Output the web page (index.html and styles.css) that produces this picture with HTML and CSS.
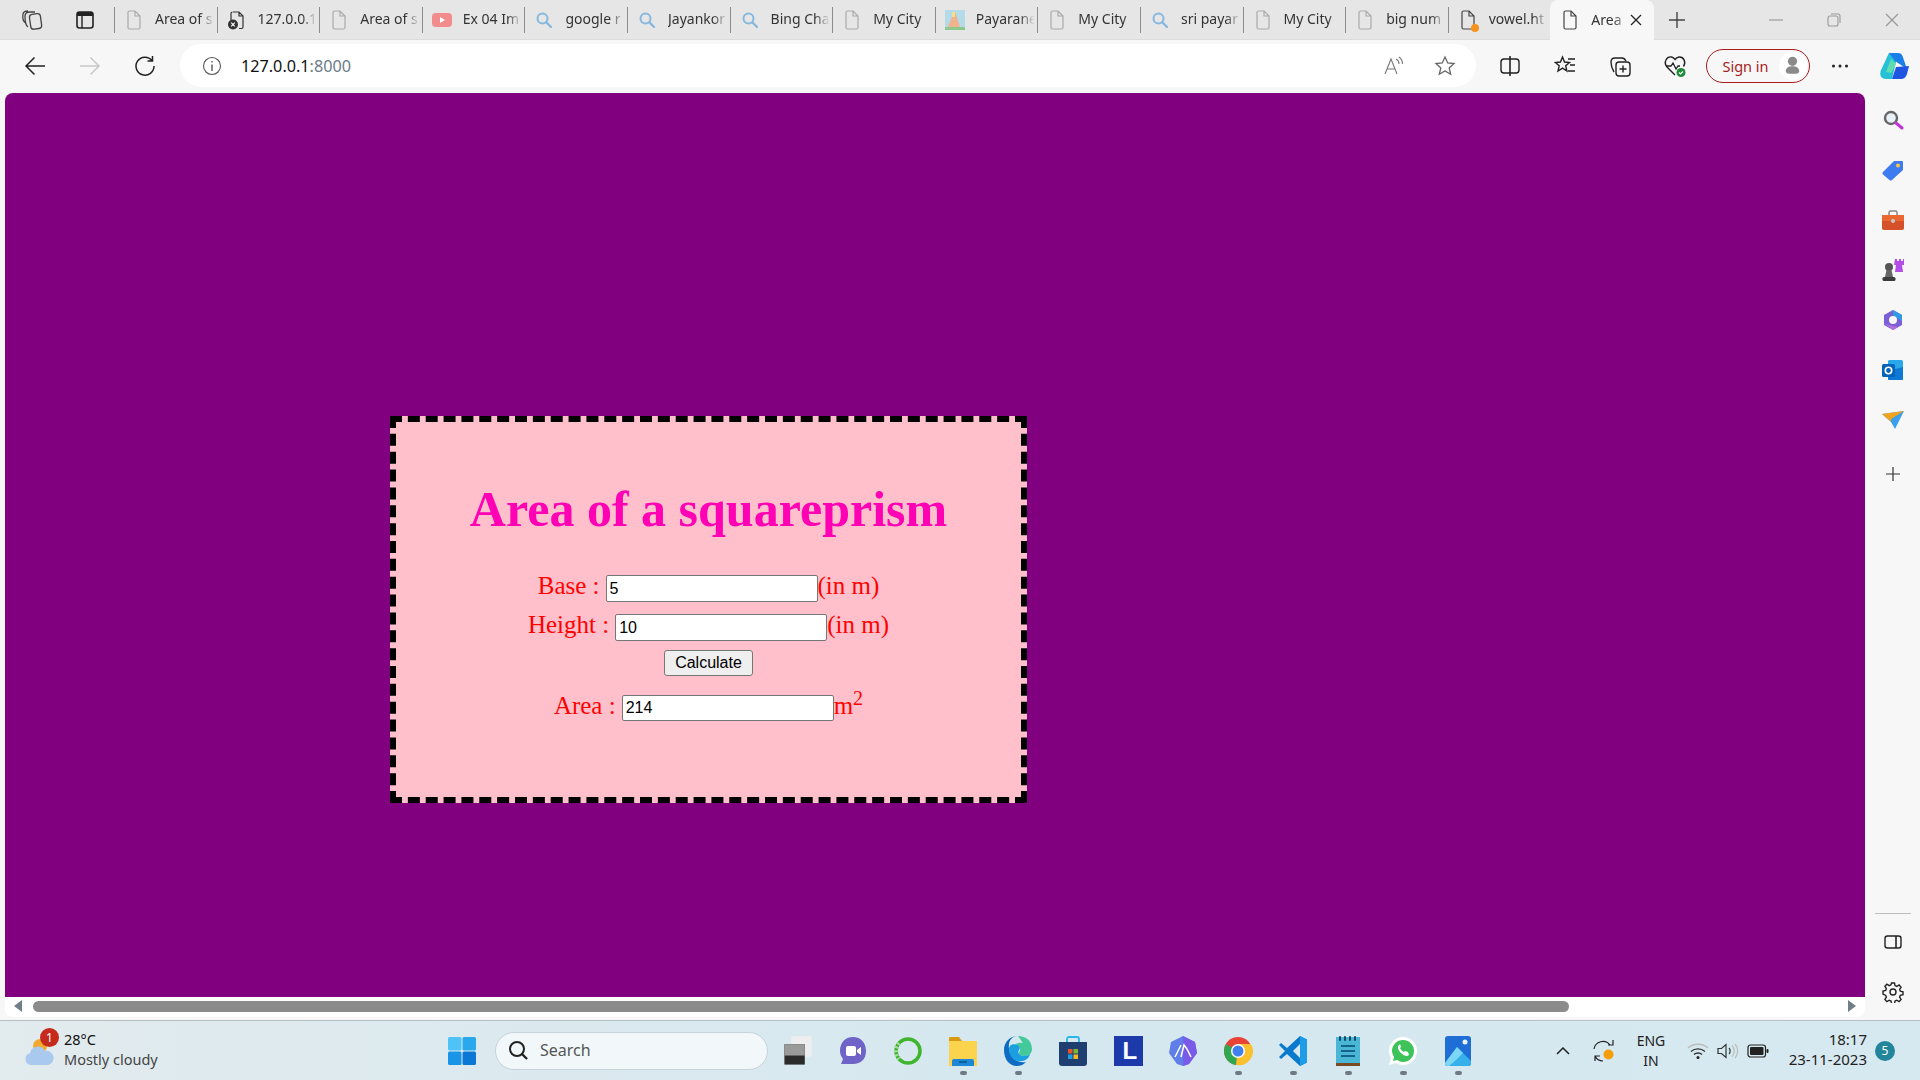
FILE: index.html
```html
<!DOCTYPE html>
<html lang="en">
<head>
    <meta charset="UTF-8">
    <meta name="viewport" content="width=device-width, initial-scale=1.0">
    <title>Area of a squareprism</title>
    <link rel="stylesheet" href="styles.css">
</head>
<body>
    <svg class="defs" width="0" height="0">
        <symbol id="doc" viewBox="0 0 20 20"><path d="M4 2.5a1.5 1.5 0 0 1 1.5-1.5H11l5 5v11.500a1.500 1.500 0 0 1-1.500 1.500h-9A1.500 1.500 0 0 1 4 17.500z M11 1v5h5" fill="none" stroke="currentColor" stroke-width="1.200"/></symbol>
        <symbol id="find" viewBox="0 0 20 20"><circle cx="8.500" cy="8.500" r="5" fill="none" stroke="#86b8de" stroke-width="2"/><path d="M12.500 12.500l4.500 4.500" stroke="#86b8de" stroke-width="2.400" stroke-linecap="round"/></symbol>
    </svg>

    <div class="tabstrip">
        <div class="strip-btn">
            <svg width="24" height="24" viewBox="0 0 24 24" fill="none" stroke="#444" stroke-width="1.300"><rect x="10" y="6" width="11" height="15" rx="3" transform="rotate(-8 15 13)"/><path d="M8 19C5 17 5 12 5 8c0-2 1-4 5-4h5M5.500 15C3 13 2.500 9 3 6c.3-2 2-3 5-3"/></svg>
        </div>
        <div class="strip-btn">
            <svg width="22" height="22" viewBox="0 0 22 22"><rect x="3" y="3" width="16" height="16" rx="2.500" fill="none" stroke="#222" stroke-width="1.600"/><path d="M3 5.500a2.500 2.500 0 0 1 2.500-2.500h11a2.500 2.500 0 0 1 2.500 2.500V7H3z" fill="#222"/><path d="M8 7v12" stroke="#222" stroke-width="1.400"/></svg>
        </div>
        <div class="tab"><svg class="tab-icon faded" width="20" height="20"><use href="#doc"/></svg><span class="tab-title">Area of s</span></div>
        <div class="tab">
            <svg class="tab-icon" width="20" height="20" viewBox="0 0 20 20"><path d="M6 2h6l4 4v11a1.500 1.500 0 0 1-1.500 1.500H12M4 10V3.500A1.500 1.500 0 0 1 5.500 2M12 2v4h4" fill="none" stroke="#333" stroke-width="1.200"/><circle cx="6" cy="14.500" r="5" fill="#333"/><path d="M4.200 12.700l3.600 3.600M7.800 12.700l-3.600 3.600" stroke="#fff" stroke-width="1.200"/></svg>
            <span class="tab-title">127.0.0.1</span>
        </div>
        <div class="tab"><svg class="tab-icon faded" width="20" height="20"><use href="#doc"/></svg><span class="tab-title">Area of s</span></div>
        <div class="tab">
            <svg class="tab-icon" width="20" height="20" viewBox="0 0 20 20"><rect y="3" width="20" height="14" rx="4" fill="#f28b8b"/><path d="M8 7l5 3-5 3z" fill="#fff"/></svg>
            <span class="tab-title">Ex 04 Im</span>
        </div>
        <div class="tab"><svg class="tab-icon" width="20" height="20"><use href="#find"/></svg><span class="tab-title">google r</span></div>
        <div class="tab"><svg class="tab-icon" width="20" height="20"><use href="#find"/></svg><span class="tab-title">Jayankor</span></div>
        <div class="tab"><svg class="tab-icon" width="20" height="20"><use href="#find"/></svg><span class="tab-title">Bing Cha</span></div>
        <div class="tab"><svg class="tab-icon faded" width="20" height="20"><use href="#doc"/></svg><span class="tab-title">My City</span></div>
        <div class="tab">
            <svg class="tab-icon" width="20" height="20" viewBox="0 0 20 20"><rect width="20" height="20" fill="#b5dbe8"/><rect y="17" width="20" height="3" fill="#8cc98c"/><path d="M3 17L8.500 3h2L15 17z" fill="#efb48e"/><path d="M7 2h3v5H7z" fill="#f3e08a"/></svg>
            <span class="tab-title">Payarane</span>
        </div>
        <div class="tab"><svg class="tab-icon faded" width="20" height="20"><use href="#doc"/></svg><span class="tab-title">My City</span></div>
        <div class="tab"><svg class="tab-icon" width="20" height="20"><use href="#find"/></svg><span class="tab-title">sri payar</span></div>
        <div class="tab"><svg class="tab-icon faded" width="20" height="20"><use href="#doc"/></svg><span class="tab-title">My City</span></div>
        <div class="tab"><svg class="tab-icon faded" width="20" height="20"><use href="#doc"/></svg><span class="tab-title">big num</span></div>
        <div class="tab">
            <span class="tab-icon unsaved"><svg width="20" height="20"><use href="#doc"/></svg><i class="orange-dot"></i></span>
            <span class="tab-title">vowel.ht</span>
        </div>
        <div class="tab tab-active">
            <svg class="tab-icon" width="20" height="20"><use href="#doc"/></svg>
            <span class="tab-title">Area</span>
            <svg class="tab-close" width="12" height="12" viewBox="0 0 12 12"><path d="M1 1l10 10M11 1L1 11" stroke="#222" stroke-width="1.300"/></svg>
        </div>
        <div class="new-tab">
            <svg width="18" height="18" viewBox="0 0 18 18"><path d="M9 1v16M1 9h16" stroke="#444" stroke-width="1.400"/></svg>
        </div>
        <div class="window-btns">
            <svg width="14" height="14" viewBox="0 0 14 14"><path d="M0 7h14" stroke="#999" stroke-width="1.200"/></svg>
            <svg width="14" height="14" viewBox="0 0 14 14" fill="none" stroke="#999" stroke-width="1.100"><rect x="1" y="3" width="10" height="10" rx="2"/><path d="M4 1h7a2 2 0 0 1 2 2v7"/></svg>
            <svg width="14" height="14" viewBox="0 0 14 14"><path d="M1 1l12 12M13 1L1 13" stroke="#999" stroke-width="1.200"/></svg>
        </div>
    </div>

    <div class="toolbar">
        <div class="tool-btn"><svg width="22" height="22" viewBox="0 0 22 22" fill="none" stroke="#222" stroke-width="1.500"><path d="M21 11H2M10.500 2.500L2 11l8.500 8.500"/></svg></div>
        <div class="tool-btn"><svg width="22" height="22" viewBox="0 0 22 22" fill="none" stroke="#c8c8c8" stroke-width="1.500"><path d="M1 11h19M11.500 2.500L20 11l-8.500 8.500"/></svg></div>
        <div class="tool-btn"><svg width="22" height="22" viewBox="0 0 22 22" fill="none" stroke="#222" stroke-width="1.500"><path d="M18 5.500A9 9 0 1 0 20 11M18.500 1v5h-5"/></svg></div>
        <div class="address">
            <svg width="20" height="20" viewBox="0 0 20 20" fill="none" stroke="#555" stroke-width="1.100"><circle cx="10" cy="10" r="8.500"/><path d="M10 8.500V15M10 5v1.500" stroke-width="1.400"/></svg>
            <div class="url">127.0.0.1<span class="url-port">:8000</span></div>
            <svg class="read-aloud" width="24" height="24" viewBox="0 0 24 24" fill="none" stroke="#777" stroke-width="1.100"><path d="M3 20L9 5l6 15M5.500 15h7M14 5c2 1 3 3 3 5M17 3c2 1.500 3.500 4 3.500 7"/></svg>
            <svg class="star" width="22" height="22" viewBox="0 0 22 22" fill="none" stroke="#666" stroke-width="1.300"><path d="M11 2l2.700 6 6.300.6-4.800 4.300 1.500 6.400L11 16l-5.700 3.300 1.500-6.400L2 8.600 8.300 8z"/></svg>
        </div>
        <div class="tool-group">
            <div class="tool-btn"><svg width="22" height="22" viewBox="0 0 22 22" fill="none" stroke="#222" stroke-width="1.400"><rect x="2" y="4" width="18" height="14" rx="3"/><path d="M11 1v20" stroke-width="1.600"/></svg></div>
            <div class="tool-btn"><svg width="24" height="24" viewBox="0 0 24 24" fill="none" stroke="#222" stroke-width="1.400"><path d="M9.500 3l2 5 5 .5-3.800 3.300 1.200 5.200-4.400-2.800L5 17l1.200-5.200L2.400 8.500l5-.5zM15 5h7M17 11h5M15 17h7"/></svg></div>
            <div class="tool-btn"><svg width="24" height="24" viewBox="0 0 24 24" fill="none" stroke="#222" stroke-width="1.400"><rect x="8" y="8" width="14" height="14" rx="3"/><path d="M15 11.500v7M11.500 15h7M6 18C4 15 3 11 3 8c0-2 1-4 4-4h7c2 0 3 1 4 3"/></svg></div>
            <div class="tool-btn"><svg width="24" height="24" viewBox="0 0 24 24"><path d="M12 21L4 13C0 8 4 2 8.500 3c1.500.3 2.700 1.200 3.500 2.500C13 4 14.500 3.200 16 3c4.500-.5 7.500 5 4.500 9.500" fill="none" stroke="#222" stroke-width="1.400"/><path d="M3 12h5l2-3 3 6 2-3h2" fill="none" stroke="#222" stroke-width="1.300"/><circle cx="18" cy="18.500" r="4.500" fill="#1e8a3c"/><path d="M16 18.500l1.500 1.500 2.500-2.500" fill="none" stroke="#fff" stroke-width="1.100"/></svg></div>
        </div>
        <div class="sign-in">
            <span class="sign-in-text">Sign in</span>
            <span class="avatar"><svg viewBox="0 0 18 24" fill="#8a8a8a"><circle cx="9" cy="7" r="5.500"/><path d="M1 19c0-4 3-6 8-6s8 2 8 6c0 2-2 3-4 3H5c-2 0-4-1-4-3z"/></svg></span>
        </div>
        <div class="tool-btn"><svg width="18" height="4" viewBox="0 0 18 4" fill="#222"><circle cx="2.500" cy="2" r="1.500"/><circle cx="9" cy="2" r="1.500"/><circle cx="15.500" cy="2" r="1.500"/></svg></div>
        <div class="copilot">
            <svg width="32" height="32" viewBox="0 0 32 32"><path d="M11 3h9l-6 26H8C3 29 1 25 3 20z" fill="#27c0d6"/><path d="M11 3h9c2 0 4 1 4.500 3L29 19 17 11z" fill="#1a7fe8"/><path d="M14 29h9c3 0 5-2 6-5l2-8-13 1z" fill="#1f55e0"/><path d="M8 22l5-13 5 5-5 9z" fill="#5fdcb0"/></svg>
        </div>
    </div>

    <div class="browser-body">
        <div class="viewport">
            <main class="page">
                <div class="card">
                    <h1 class="title">Area of a squareprism</h1>
                    <div class="row row-base">
                        <label class="field-label">Base :</label><input class="field" type="text" value="5"><span class="unit">(in m)</span>
                    </div>
                    <div class="row row-height">
                        <label class="field-label">Height :</label><input class="field" type="text" value="10"><span class="unit">(in m)</span>
                    </div>
                    <div class="row row-btn">
                        <button class="calc-btn">Calculate</button>
                    </div>
                    <div class="row row-area">
                        <label class="field-label">Area :</label><input class="field" type="text" value="214"><span class="unit">m<sup class="power">2</sup></span>
                    </div>
                </div>
            </main>
            <div class="hscroll">
                <span class="arrow-left"></span>
                <div class="hscroll-track"><div class="hscroll-thumb"></div></div>
                <span class="arrow-right"></span>
            </div>
        </div>

        <aside class="sidebar">
            <div class="side-btn"><svg width="22" height="22" viewBox="0 0 22 22"><circle cx="9" cy="9" r="6" fill="#e8f1f8" stroke="#666" stroke-width="2.400"/><path d="M14 14l6 5" stroke="#c034d8" stroke-width="3" stroke-linecap="round"/></svg></div>
            <div class="side-btn"><svg width="22" height="22" viewBox="0 0 22 22"><path d="M1 13L12 2h8a1 1 0 0 1 1 1v8L10 21a2 2 0 0 1-2.500 0L1 15.500a2 2 0 0 1 0-2.500z" fill="#3f7bf0"/><circle cx="16" cy="6.500" r="2" fill="#f6c945"/></svg></div>
            <div class="side-btn"><svg width="24" height="22" viewBox="0 0 24 22"><path d="M8 6V3.500A1.500 1.500 0 0 1 9.500 2h5A1.500 1.500 0 0 1 16 3.500V6" fill="none" stroke="#888" stroke-width="1.500"/><rect x="1" y="6" width="22" height="15" rx="2" fill="#d5512a"/><rect x="1" y="6" width="22" height="6" fill="#e8682f"/><circle cx="12" cy="12" r="2" fill="#c9c9c9"/></svg></div>
            <div class="side-btn"><svg width="24" height="24" viewBox="0 0 24 24"><circle cx="8" cy="9" r="4" fill="#555"/><path d="M5.500 12h5l1.500 7H4z" fill="#666"/><rect x="1.500" y="19" width="13" height="4" rx="1.500" fill="#3c3c3c"/><path d="M14 1h2v2h2V1h2v2h2V1h1v6h-2l1 7h-8l1-7h-2z" fill="#b44de8"/></svg></div>
            <div class="side-btn"><svg width="22" height="22" viewBox="0 0 22 22"><path d="M11 1l9 5v10l-9 5-9-5V6z" fill="#7a5fd6"/><path d="M11 1l9 5v6l-5-3-4-2z" fill="#2f9be6"/><path d="M2 14l5 2 9 2-5 3z" fill="#b06fd8"/><circle cx="11" cy="11" r="4" fill="#f7f7f7"/></svg></div>
            <div class="side-btn"><svg width="22" height="22" viewBox="0 0 22 22"><rect x="6" y="1" width="15" height="20" rx="1.500" fill="#28a8ea"/><path d="M6 12l15-4v12a1 1 0 0 1-1 1H7a1 1 0 0 1-1-1z" fill="#0f78d4"/><rect x="0" y="5" width="13" height="13" rx="1.500" fill="#0364b8"/><circle cx="6.500" cy="11.500" r="3.200" fill="none" stroke="#fff" stroke-width="1.600"/></svg></div>
            <div class="side-btn"><svg width="24" height="20" viewBox="0 0 24 20"><path d="M1 4l22-3-9 18-4-7z" fill="#3aa0ee"/><path d="M1 4l22-3-13 8 0 3z" fill="#f0a41e"/></svg></div>
            <div class="side-btn side-plus"><svg width="16" height="16" viewBox="0 0 16 16"><path d="M8 1v14M1 8h14" stroke="#333" stroke-width="1.200"/></svg></div>
            <div class="side-bottom">
                <div class="side-rule"></div>
                <div class="side-btn"><svg width="20" height="20" viewBox="0 0 20 20" fill="none" stroke="#222" stroke-width="1.400"><rect x="2" y="4" width="16" height="12" rx="2.500"/><path d="M13 4v12" stroke-width="1.600"/></svg></div>
                <div class="side-btn"><svg width="22" height="22" viewBox="0 0 22 22" fill="none" stroke="#222" stroke-width="1.400"><circle cx="11" cy="11" r="3"/><path d="M9.500 2h3l.5 2.600 1.800.8 2.300-1.400 2 2.200-1.500 2.200.7 1.800 2.700.6v3l-2.700.6-.7 1.800 1.500 2.200-2 2.200-2.300-1.400-1.800.8-.5 2.600h-3l-.5-2.600-1.800-.8-2.300 1.400-2-2.200 1.500-2.200-.7-1.800L1 13V10l2.700-.6.7-1.800-1.500-2.200 2-2.200 2.300 1.400 1.800-.8z"/></svg></div>
            </div>
        </aside>
    </div>

    <footer class="taskbar">
        <div class="weather">
            <div class="weather-icon">
                <svg width="36" height="36" viewBox="0 0 36 36"><circle cx="17" cy="13" r="7" fill="#f1a92e"/><path d="M8 32a6 6 0 0 1-1-11.800A8 8 0 0 1 22 18a6.500 6.500 0 0 1 3 14z" fill="#a9c9ee"/></svg>
                <span class="weather-badge">1</span>
            </div>
            <div class="weather-text">
                <div class="temp">28°C</div>
                <div class="cond">Mostly cloudy</div>
            </div>
        </div>
        <div class="task-icon">
            <svg width="30" height="30" viewBox="0 0 30 30"><rect x="1" y="1" width="13.500" height="13.500" rx="1.500" fill="#4fc3f7"/><rect x="15.500" y="1" width="13.500" height="13.500" rx="1.500" fill="#29a8ee"/><rect x="1" y="15.500" width="13.500" height="13.500" rx="1.500" fill="#1a94e6"/><rect x="15.500" y="15.500" width="13.500" height="13.500" rx="1.500" fill="#0a78d4"/></svg>
        </div>
        <div class="search-box">
            <svg width="22" height="22" viewBox="0 0 22 22" fill="none" stroke="#222" stroke-width="2"><circle cx="10" cy="10" r="7"/><path d="M15 15l5 5" stroke-width="2.400"/></svg>
            <span>Search</span>
        </div>
        <div class="task-icons">
            <div class="task-icon"><svg width="34" height="34" viewBox="0 0 30 30"><rect x="9" y="2" width="18" height="18" rx="1" fill="#eee"/><rect x="3" y="9" width="18" height="18" fill="#2b2b2b"/><rect x="3" y="9" width="18" height="10" fill="#9a9a9a"/></svg></div>
            <div class="task-icon"><svg width="30" height="32" viewBox="0 0 30 32"><path d="M15 2c8 0 13 6 13 14s-5 13-13 13H3l2-5C3 21 2 19 2 16 2 8 7 2 15 2z" fill="#6f63c8"/><rect x="8" y="11" width="10" height="10" rx="2" fill="#fff"/><path d="M19 15l4-3v8l-4-3z" fill="#fff"/></svg></div>
            <div class="task-icon"><svg width="30" height="32" viewBox="0 0 30 32"><circle cx="15" cy="16" r="12" fill="none" stroke="#3fb52e" stroke-width="3.500"/><path d="M6 8a12 12 0 0 0 0 16" fill="none" stroke="#a8dca0" stroke-width="4" stroke-dasharray="2 2"/></svg></div>
            <div class="task-icon running"><svg width="30" height="32" viewBox="0 0 30 32"><path d="M1 3a1 1 0 0 1 1-1h9l3 4H1z" fill="#d89b12"/><path d="M1 6h28v25H1z" fill="#fcd34d"/><path d="M6 24h18a2 2 0 0 1 2 2v5H4v-5a2 2 0 0 1 2-2z" fill="#1b87d6"/><path d="M11 27h8" stroke="#0b4f8a" stroke-width="1.400"/></svg></div>
            <div class="task-icon running"><svg width="30" height="32" viewBox="0 0 30 32"><path d="M15 1c8 0 14 5 14 13 0 5-4 7-8 7-3 0-5-1-5-3 0-1 1-2 1-3 0-3-3-5-6-4 2-3 6-4 9-3" fill="#43c99a"/><path d="M1 15C1 7 7 1 15 1 8 1 5 7 6 14c1 8 8 15 17 13-3 3-6 4-9 4C6 31 1 24 1 15z" fill="#0f6cc4"/><path d="M6 14c0-4 4-6 8-4 3 1 3 4 2 5-2 3 1 6 5 6 2 0 5-1 6-2-1 5-6 8-12 7-6-1-9-7-9-12z" fill="#1a9fe0"/></svg></div>
            <div class="task-icon"><svg width="30" height="32" viewBox="0 0 30 32"><path d="M9 8V4a2 2 0 0 1 2-2h8a2 2 0 0 1 2 2v4" fill="none" stroke="#29b6e8" stroke-width="1.800"/><path d="M1 7h28v21a3 3 0 0 1-3 3H4a3 3 0 0 1-3-3z" fill="#1f3f70"/><rect x="10" y="14" width="4.500" height="4.500" fill="#e8532b"/><rect x="15.500" y="14" width="4.500" height="4.500" fill="#7cb82f"/><rect x="10" y="19.500" width="4.500" height="4.500" fill="#1aa0e8"/><rect x="15.500" y="19.500" width="4.500" height="4.500" fill="#f8b71c"/></svg></div>
            <div class="task-icon"><div class="l-tile">L</div></div>
            <div class="task-icon"><svg width="30" height="32" viewBox="0 0 30 32"><path d="M15 1l12 6 2 11-8 11-6 2-6-2-8-11 2-11z" fill="#5f7ee8"/><path d="M15 1l12 6 2 11-8 11-6 2z" fill="#7a5be8"/><path d="M7 22l6-12M13 22l3-12 3 4M19 14l4 8" fill="none" stroke="#fff" stroke-width="1.500"/></svg></div>
            <div class="task-icon running"><svg width="30" height="30" viewBox="0 0 30 30"><circle cx="15" cy="15" r="14" fill="#e84335"/><path d="M15 15L3 8a14 14 0 0 0 10 21z" fill="#2fa84f"/><path d="M15 8h12.800A14 14 0 0 1 13 29z" fill="#fbc02d"/><circle cx="15" cy="15" r="7" fill="#fff"/><circle cx="15" cy="15" r="5.500" fill="#3f7fee"/></svg></div>
            <div class="task-icon running"><svg width="30" height="32" viewBox="0 0 30 32"><path d="M22 1l7 3.500v23L22 31 9 19l-6 5-2-2 6-6-6-6 2-2 6 5z" fill="#0a7acc"/><path d="M22 1l7 3.500v23L22 31z" fill="#1f9ce8"/><path d="M22 9l-7 7 7 7z" fill="#d6e8ef"/></svg></div>
            <div class="task-icon running"><svg width="26" height="32" viewBox="0 0 26 32"><rect x="1" y="2" width="24" height="27" fill="#4ab6d6"/><rect x="1" y="28" width="24" height="3" fill="#7a4a24"/><path d="M5 2v3M10 2v3M15 2v3M20 2v3" stroke="#134a66" stroke-width="2" stroke-linecap="round"/><path d="M6 11h14M6 16h14M6 21h14" stroke="#14648a" stroke-width="2"/></svg></div>
            <div class="task-icon running"><svg width="30" height="32" viewBox="0 0 30 32"><path d="M15 2a14 14 0 0 1 0 28c-3 0-5-1-7-2l-7 2 2-7c-1-2-2-4-2-7A14 14 0 0 1 15 2z" fill="#fff"/><path d="M15 5a11 11 0 0 1 0 22c-2 0-4-1-6-2l-4 1 1-4c-1-2-2-4-2-6A11 11 0 0 1 15 5z" fill="#3ec25a"/><path d="M11 10c-2 2-1 5 2 8s6 4 8 2l-1-3-3-1-1 1c-2-1-3-2-4-4l1-1-1-3z" fill="#fff"/></svg></div>
            <div class="task-icon running"><svg width="28" height="32" viewBox="0 0 28 32"><rect x="1" y="1" width="26" height="30" rx="3" fill="#1e6ed6"/><path d="M1 28L13 12l14 14v2a3 3 0 0 1-3 3H4a3 3 0 0 1-3-3z" fill="#35b0ea"/><path d="M13 12l6 6-8 8-6 5H4a3 3 0 0 1-3-3z" fill="#7cd6f5"/><circle cx="21" cy="7" r="2.500" fill="#e8f4fb"/></svg></div>
        </div>
        <div class="tray">
            <div class="tray-item tray-chevron"><svg width="14" height="8" viewBox="0 0 14 8" fill="none" stroke="#222" stroke-width="1.500"><path d="M1 7l6-6 6 6"/></svg></div>
            <div class="tray-item tray-sync"><svg width="24" height="24" viewBox="0 0 24 24" fill="none" stroke="#222" stroke-width="1.200"><path d="M2 10a9 9 0 0 1 16-4M21 1v5h-5M3 22v-5h5M3 17a9 9 0 0 0 8 5"/><circle cx="16.500" cy="15.500" r="5" fill="#f59e0b" stroke="none"/></svg></div>
            <div class="lang"><div>ENG</div><div>IN</div></div>
            <div class="tray-item"><svg width="22" height="18" viewBox="0 0 22 18" fill="none" stroke="#bbb" stroke-width="1.400"><path d="M1 6c5-5 15-5 20 0"/><path d="M4 9.500c4-3.500 10-3.500 14 0" stroke="#333"/><path d="M7 12.500c2-2 6-2 8 0" stroke="#333"/><circle cx="11" cy="15.500" r="1.500" fill="#222" stroke="none"/></svg></div>
            <div class="tray-item"><svg width="22" height="18" viewBox="0 0 22 18" fill="none" stroke="#333" stroke-width="1.200"><path d="M1 6.500h3.500L9 2.500v13l-4.500-4H1z"/><path d="M12 6c1.500 1.500 1.500 4.500 0 6"/><path d="M15 3.500c3 3 3 8 0 11M18 2c3.500 4 3.500 10 0 14" stroke="#bbb"/></svg></div>
            <div class="tray-item"><svg width="22" height="14" viewBox="0 0 22 14"><rect x="1" y="1" width="17.500" height="12" rx="2.500" fill="none" stroke="#222" stroke-width="1.200"/><rect x="3" y="3" width="13.500" height="8" rx="1" fill="#222"/><rect x="19.500" y="5" width="2" height="4" rx="1" fill="#222"/></svg></div>
            <div class="clock"><div>18:17</div><div>23-11-2023</div></div>
            <div class="notif">5</div>
        </div>
    </footer>
</body>
</html>
```

FILE: styles.css
```css
* {
    box-sizing: border-box;
}

html,
body {
    margin: 0;
    height: 1080px;
    overflow: hidden;
}

body {
    display: flex;
    flex-direction: column;
    background: #f7f7f7;
    font-family: "Noto Sans", "Open Sans", sans-serif;
    color: #222;
}

.defs {
    position: absolute;
}

/* tab strip */
.tabstrip {
    display: flex;
    align-items: center;
    height: 40px;
    background: #e6e6e6;
    border-bottom: 1px solid #dcdcdc;
}

.strip-btn {
    display: flex;
    align-items: center;
    justify-content: center;
    width: 52px;
    margin-left: 6px;
}

.strip-btn + .strip-btn {
    margin-left: 0;
    margin-right: 3px;
    width: 53px;
}

.tab {
    display: flex;
    align-items: center;
    flex: 0 0 102.6px;
    min-width: 0;
    height: 26px;
    padding-left: 9px;
    border-left: 1px solid #8c8c8c;
    font-size: 14px;
    color: #333;
}

.tab-icon {
    flex: none;
    color: #444;
}

.tab-icon.faded {
    color: #aaa;
}

.unsaved {
    position: relative;
    width: 20px;
    height: 20px;
}

.orange-dot {
    position: absolute;
    right: -1px;
    bottom: -2px;
    width: 8px;
    height: 8px;
    border-radius: 50%;
    background: #f7931e;
}

.tab-title {
    flex: 1;
    min-width: 0;
    margin-left: 11px;
    padding-bottom: 2px;
    white-space: nowrap;
    -webkit-mask-image: linear-gradient(90deg, #000 72%, transparent 96%);
    mask-image: linear-gradient(90deg, #000 72%, transparent 96%);
}

.tab-active {
    flex-basis: 104px;
    height: 40px;
    margin-bottom: -1px;
    background: #f7f7f7;
    border-left: none;
    border-radius: 8px 8px 0 0;
    padding-left: 10px;
}

.tab-active .tab-title {
    -webkit-mask-image: linear-gradient(90deg, #000 55%, transparent 100%);
    mask-image: linear-gradient(90deg, #000 55%, transparent 100%);
}

.tab-close {
    flex: none;
    margin-right: 12px;
}

.new-tab {
    display: flex;
    justify-content: center;
    width: 46px;
}

.window-btns {
    display: flex;
    justify-content: space-between;
    width: 130px;
    margin-left: 69px;
}

/* toolbar */
.toolbar {
    display: flex;
    align-items: center;
    height: 53px;
    padding: 0 0 2px 7.5px;
    background: #f7f7f7;
}

.tool-btn {
    display: flex;
    align-items: center;
    justify-content: center;
    flex: 0 0 55px;
}

.address {
    display: flex;
    align-items: center;
    width: 1296px;
    height: 43px;
    margin-left: 7.500px;
    padding: 0 20px 0 22px;
    background: #fff;
    border-radius: 22px;
}

.url {
    flex: 1;
    margin-left: 19px;
    font-size: 16.200px;
    color: #111;
}

.url-port {
    color: #6a7a88;
}

.read-aloud {
    margin-right: 28px;
}

.tool-group {
    display: flex;
    margin-left: 6.500px;
}

.sign-in {
    display: flex;
    align-items: center;
    justify-content: space-between;
    width: 104px;
    height: 34px;
    margin-left: 3px;
    margin-right: 3px;
    padding: 0 2px 0 16px;
    border: 1.500px solid #a81c1c;
    border-radius: 17px;
    font-size: 14.500px;
    color: #a81c1c;
}

.avatar {
    display: flex;
    align-items: center;
    justify-content: center;
    width: 28px;
    height: 28px;
    border-radius: 50%;
    background: #fff;
}

.avatar svg {
    width: 15px;
    height: 21px;
}

.copilot {
    display: flex;
    justify-content: center;
    flex: 1;
}

/* page area */
.browser-body {
    display: flex;
    height: 927px;
}

.viewport {
    display: flex;
    flex-direction: column;
    width: 1860px;
    margin-left: 5px;
    height: 924px;
    background: #fff;
    border-radius: 8px;
    overflow: hidden;
}

.page {
    flex: none;
    height: 904px;
    padding: 323px 0 0 385px;
    background: #800080;
}

.card {
    width: 637px;
    height: 387px;
    padding-top: 58px;
    background: #ffc0cb;
    border: 6px dashed #000;
    color: #f00;
    font-family: "Liberation Serif", "Times New Roman", serif;
    font-size: 25px;
}

.title {
    margin: 0 0 37px;
    font-size: 50px;
    line-height: 58px;
    font-weight: bold;
    text-align: center;
    color: #ff00b4;
}

.row {
    display: flex;
    align-items: center;
    justify-content: center;
    height: 27px;
}

.row-height {
    margin-top: 12px;
}

.row-btn {
    margin-top: 9px;
    height: 26px;
}

.row-area {
    margin-top: 19px;
    height: 26px;
}

.row-area .field {
    height: 26px;
}

.field-label {
    margin-right: 6px;
    margin-bottom: 5px;
}

.unit {
    margin-bottom: 5px;
}

.field {
    width: 212px;
    height: 27px;
    padding: 1px 3px;
    background: #fff;
    border: 1px solid #767676;
    border-radius: 2px;
    font-family: "Liberation Sans", Arial, sans-serif;
    font-size: 16px;
    color: #000;
}

.calc-btn {
    width: 89px;
    height: 26px;
    padding: 0;
    background: #efefef;
    border: 1px solid #767676;
    border-radius: 3px;
    font-family: "Liberation Sans", Arial, sans-serif;
    font-size: 16px;
    color: #000;
}

.power {
    font-size: 20px;
    line-height: 0;
}

/* bottom scrollbar */
.hscroll {
    display: flex;
    align-items: center;
    flex: 1;
    padding: 0 9px 2px;
}

.arrow-left {
    width: 0;
    height: 0;
    border-top: 6px solid transparent;
    border-bottom: 6px solid transparent;
    border-right: 8px solid #6f7f88;
}

.arrow-right {
    width: 0;
    height: 0;
    border-top: 6px solid transparent;
    border-bottom: 6px solid transparent;
    border-left: 8px solid #6f7f88;
}

.hscroll-track {
    flex: 1;
    padding-left: 11px;
}

.hscroll-thumb {
    width: 1536px;
    height: 11px;
    background: #8b8b8b;
    border-radius: 6px;
}

/* edge sidebar */
.sidebar {
    display: flex;
    flex-direction: column;
    align-items: center;
    flex: 1;
    padding-top: 2px;
}

.side-btn {
    display: flex;
    align-items: center;
    justify-content: center;
    width: 40px;
    height: 50px;
    flex: none;
}

.side-plus {
    margin-top: 4px;
}

.side-bottom {
    display: flex;
    flex-direction: column;
    align-items: center;
    margin-top: auto;
    padding-bottom: 3px;
}

.side-rule {
    width: 36px;
    margin-bottom: 3px;
    border-top: 1px solid #bdbdbd;
}

/* windows taskbar */
.taskbar {
    display: flex;
    align-items: center;
    flex: 1;
    padding-left: 23px;
    background: linear-gradient(90deg, #e2ebee, #d6e8ef 50%, #d6e8f0);
    border-top: 1px solid #b4c0c6;
}

.weather {
    display: flex;
    align-items: center;
    width: 411px;
}

.weather-icon {
    position: relative;
    width: 36px;
    height: 36px;
    margin-right: 5px;
}

.weather-badge {
    position: absolute;
    top: -5px;
    right: 0;
    width: 19px;
    height: 19px;
    background: #c42b1c;
    border-radius: 50%;
    font-size: 12px;
    line-height: 19px;
    text-align: center;
    color: #fff;
}

.weather-text {
    margin-top: -4px;
    font-size: 14.500px;
    line-height: 20px;
}

.temp {
    color: #111;
}

.cond {
    color: #444;
}

.search-box {
    display: flex;
    align-items: center;
    gap: 11px;
    width: 273px;
    height: 38px;
    margin-left: 6px;
    padding: 0 0 1px 11px;
    background: #f2f8fa;
    border: 1px solid #c5d4da;
    border-radius: 19px;
    font-size: 16px;
    color: #555;
}

.task-icons {
    display: flex;
    margin-left: 2.500px;
}

.task-icon {
    position: relative;
    display: flex;
    align-items: center;
    justify-content: center;
    flex: 0 0 55px;
    height: 40px;
}

.task-icon.running::after {
    content: "";
    position: absolute;
    bottom: -4px;
    left: 24px;
    width: 7px;
    height: 4px;
    background: #6e7a80;
    border-radius: 2px;
}

.l-tile {
    width: 29px;
    height: 30px;
    padding-left: 9px;
    background: #1c3aa9;
    font-family: "Liberation Sans", Arial, sans-serif;
    font-size: 24px;
    font-weight: bold;
    line-height: 30px;
    color: #fff;
}

.tray {
    display: flex;
    align-items: center;
    margin-left: auto;
    padding-right: 25px;
}

.tray-item {
    display: flex;
    align-items: center;
    justify-content: center;
    width: 30px;
}

.tray-chevron {
    width: 40px;
}

.tray-sync {
    width: 40px;
    margin-left: 1px;
}

.lang {
    width: 50px;
    margin: 0 7px 0 2px;
    font-size: 14px;
    line-height: 20px;
    text-align: center;
    color: #222;
}

.clock {
    width: 94px;
    margin-top: -3px;
    font-size: 15px;
    line-height: 20px;
    text-align: right;
    color: #222;
}

.notif {
    width: 20px;
    height: 20px;
    margin-left: 8px;
    background: #23859b;
    border-radius: 50%;
    font-size: 12px;
    line-height: 20px;
    text-align: center;
    color: #fff;
}
```
